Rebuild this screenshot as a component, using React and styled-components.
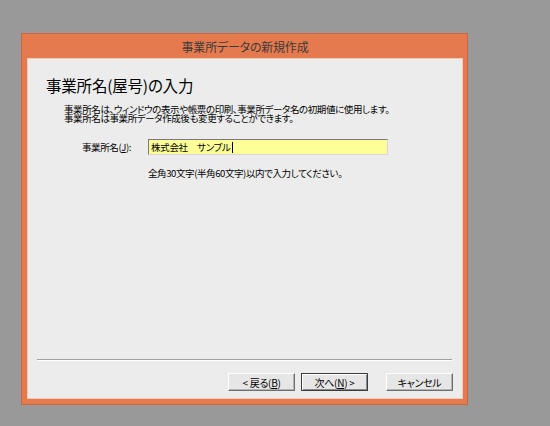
import React from "react";
import styled, { createGlobalStyle } from "styled-components";

const Global = createGlobalStyle`
  html, body { margin: 0; padding: 0; background: #999999; }
  body {
    width: 550px; height: 426px; overflow: hidden;
    font-family: "Noto Sans CJK JP", "Noto Sans", sans-serif;
    font-feature-settings: "palt";
  }
`;

const Desktop = styled.div`
  width: 550px;
  height: 426px;
  padding: 33px 0 0 21px;
  box-sizing: border-box;
`;

const Window = styled.div`
  width: 447px;
  height: 372px;
  box-sizing: border-box;
  background: #e67a4f;
  border: 1px solid #c9653f;
  display: flex;
  flex-direction: column;
  padding: 0 4px 5px 5px;
`;

const TitleBar = styled.div`
  height: 24px;
  display: flex;
  align-items: center;
  justify-content: center;
  font-size: 12px;
  color: #3b3b3b;
  letter-spacing: -0.2px;
  padding-top: 1px;
  box-sizing: border-box;
`;

const Client = styled.div`
  flex: 1;
  background: #ececec;
  border: 1px solid #f3c8b4;
  display: flex;
  flex-direction: column;
  color: #000;
`;

const Heading = styled.h1`
  margin: 16px 0 0 18px;
  font-size: 15.5px;
  line-height: 20px;
  font-weight: 400;
  letter-spacing: -0.2px;
`;

const Description = styled.p`
  margin: 10px 0 0 36px;
  font-size: 9.5px;
  line-height: 9px;
  letter-spacing: -0.4px;
`;

const FieldRow = styled.div`
  display: flex;
  align-items: center;
  margin: 16px 0 0 54px;
`;

const Label = styled.label`
  width: 66px;
  font-size: 9.5px;
  letter-spacing: -0.4px;
`;

const Key = styled.span`
  text-decoration: underline;
  text-underline-offset: 1px;
`;

const TextInput = styled.div`
  width: 240px;
  height: 16px;
  box-sizing: border-box;
  background: #ffff99;
  border: 1px solid;
  border-color: #7a7a7a #d8d8d8 #d8d8d8 #7a7a7a;
  display: flex;
  align-items: center;
  padding-left: 2px;
  font-size: 9.5px;
  letter-spacing: -0.3px;
`;

const Caret = styled.span`
  display: inline-block;
  width: 1px;
  height: 11px;
  background: #000;
  margin-left: 1px;
`;

const Hint = styled.p`
  margin: 12px 0 0 120px;
  font-size: 9.5px;
  line-height: 12px;
  letter-spacing: -0.4px;
`;

const Spacer = styled.div`
  flex: 1;
`;

const Separator = styled.hr`
  margin: 0 10px 0 9px;
  height: 0;
  border: none;
  border-top: 1px solid #a0a0a0;
  border-bottom: 1px solid #ffffff;
`;

const ButtonBar = styled.div`
  display: flex;
  justify-content: flex-end;
  margin: 12px 9px 7px 0;
`;

const Button = styled.div`
  width: 67px;
  height: 18px;
  box-sizing: border-box;
  margin-left: ${(p) => p.$gap}px;
  background: #e6e6e6;
  border: 1px solid;
  border-color: ${(p) =>
    p.$default ? "#3c3c3c" : "#ffffff #6e6e6e #6e6e6e #ffffff"};
  box-shadow: ${(p) =>
    p.$default
      ? "inset 1px 1px 0 #ffffff, inset -1px -1px 0 #8a8a8a"
      : "inset -1px -1px 0 #b4b4b4"};
  display: flex;
  align-items: center;
  justify-content: center;
  font-size: 10px;
  letter-spacing: -0.3px;
  color: #000;
`;

export default function App() {
  return (
    <>
      <Global />
      <Desktop>
        <Window>
          <TitleBar>事業所データの新規作成</TitleBar>
          <Client>
            <Heading>事業所名(屋号)の入力</Heading>
            <Description>
              事業所名は、ウィンドウの表示や帳票の印刷、事業所データ名の初期値に使用します。
              <br />
              事業所名は事業所データ作成後も変更することができます。
            </Description>
            <FieldRow>
              <Label>
                事業所名(<Key>J</Key>):
              </Label>
              <TextInput>
                株式会社　サンプル
                <Caret />
              </TextInput>
            </FieldRow>
            <Hint>全角30文字(半角60文字)以内で入力してください。</Hint>
            <Spacer />
            <Separator />
            <ButtonBar>
              <Button $gap={0}>
                &lt; 戻る(<Key>B</Key>)
              </Button>
              <Button $gap={6} $default>
                次へ(<Key>N</Key>) &gt;
              </Button>
              <Button $gap={18}>キャンセル</Button>
            </ButtonBar>
          </Client>
        </Window>
      </Desktop>
    </>
  );
}
